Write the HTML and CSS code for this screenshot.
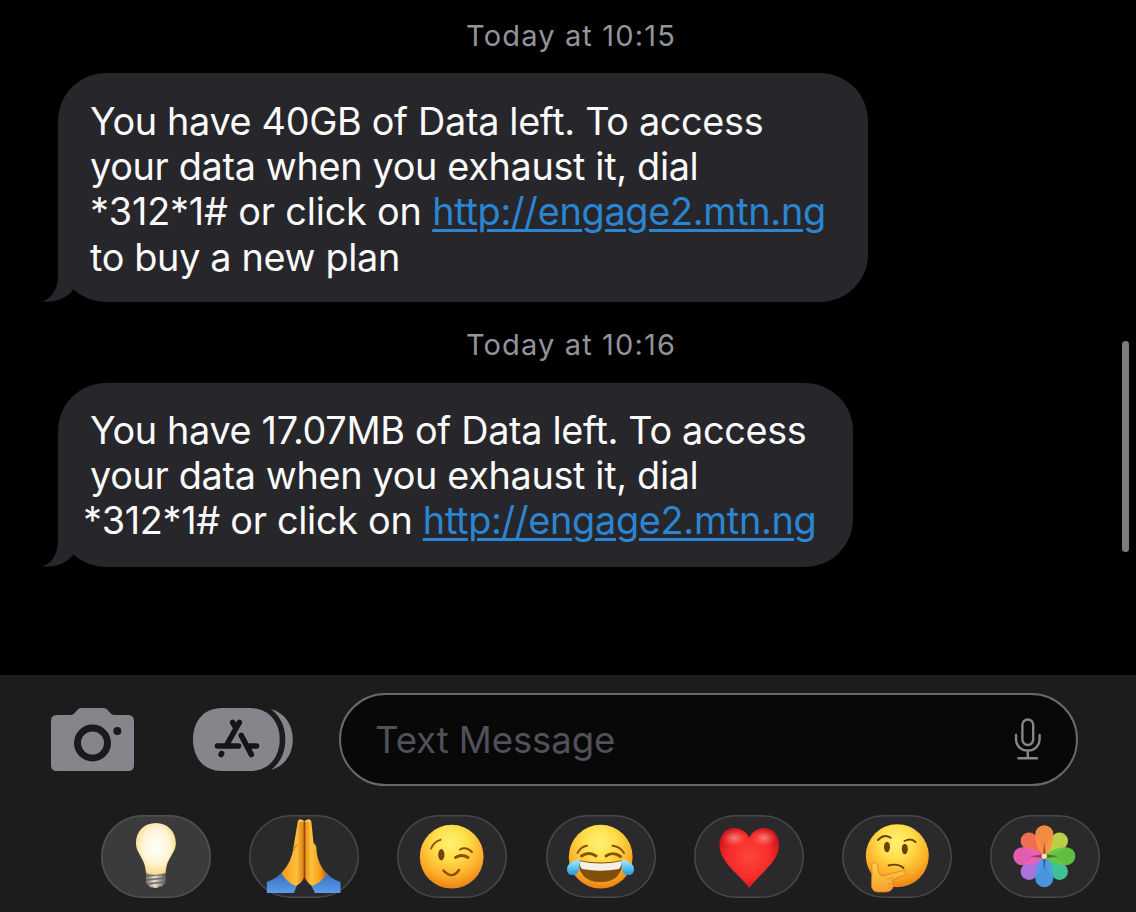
FILE: index.html
```html
<!DOCTYPE html>
<html lang="en">
<head>
<meta charset="utf-8">
<title>Messages</title>
<link rel="stylesheet" href="styles.css">
</head>
<body>
<main class="thread">
  <time class="stamp">Today at 10:15</time>
  <article class="bubble bubble-first">
    <p class="line">You have 40GB of Data left. To access</p>
    <p class="line">your data when you exhaust it, dial</p>
    <p class="line code">*312*1# or click on <a class="link">http://engage2.mtn.ng</a></p>
    <p class="line">to buy a new plan</p>
    <svg class="tail" viewBox="0 0 34 54"><path d="M16 0V27C16 40 11 50 0 53.6C13 55 25 50 32 41L34 0Z"/></svg>
  </article>
  <time class="stamp stamp-second">Today at 10:16</time>
  <article class="bubble bubble-second">
    <p class="line">You have 17.07MB of Data left. To access</p>
    <p class="line">your data when you exhaust it, dial</p>
    <p class="line code outdent">*312*1# or click on <a class="link">http://engage2.mtn.ng</a></p>
    <svg class="tail" viewBox="0 0 34 54"><path d="M16 0V27C16 40 11 50 0 53.6C13 55 25 50 32 41L34 0Z"/></svg>
  </article>
  <div class="scrollbar"></div>
</main>
<footer class="composer">
  <div class="entry">
    <svg class="camera" viewBox="0 0 83 63">
      <path fill="#85868c" d="M6 7H19C22 7 23 6 25 3.500C27 1 28 0 31 0H52C55 0 56 1 58 3.500C60 6 61 7 64 7H77Q83 7 83 13V57Q83 63 77 63H6Q0 63 0 57V13Q0 7 6 7Z"/>
      <circle cx="41.500" cy="35" r="15" fill="none" stroke="#1a1a1b" stroke-width="7"/>
      <circle cx="66.300" cy="23" r="4" fill="#1a1a1b"/>
    </svg>
    <svg class="apps" viewBox="0 0 100 63">
      <path fill="#85868c" d="M29 0H57C76 0 86.700 14 86.700 31.500S76 63 57 63H29C10 63 0 49 0 31.500S10 0 29 0Z"/>
      <path fill="#85868c" d="M78 1C92 5 99.800 17 99.800 31.500S92 58 78 62C87 55 92.300 45 92.300 31.500S87 8 78 1Z"/>
      <g fill="none" stroke="#151516" stroke-width="5.600" stroke-linecap="round">
        <path d="M46.300 14.500L34.500 35.500M39.700 14.500L43 20M24.500 38H45.500M48.300 27.500L58.300 46.500M57 38H63.500M28.600 45.500L28.100 46.500"/>
      </g>
    </svg>
    <div class="field">
      <span class="placeholder">Text Message</span>
      <svg class="mic" viewBox="0 0 28 44">
        <g fill="none" stroke="#85868c" stroke-width="2.400" stroke-linecap="round">
          <rect x="8.400" y="2.500" width="10.800" height="25.500" rx="5.400"/>
          <path d="M2 18V21.500C2 29 7 33.500 13.800 33.500S25.600 29 25.600 21.500V18M13.800 33.500V41M4.500 41.200H23"/>
        </g>
      </svg>
    </div>
  </div>
  <div class="reactions">
    <div class="pill pill-light"><svg viewBox="0 0 110 84">
      <defs>
        <radialGradient id="glow" cx=".5" cy=".45" r=".62"><stop offset="0" stop-color="#fffffb"/><stop offset=".55" stop-color="#fff5d6"/><stop offset=".85" stop-color="#fbdc94"/><stop offset="1" stop-color="#d9a95a"/></radialGradient>
        <linearGradient id="metal"><stop offset="0" stop-color="#77736a"/><stop offset=".45" stop-color="#e3dfd5"/><stop offset="1" stop-color="#625e57"/></linearGradient>
      </defs>
      <path d="M45 57H64.500V68L60 72Q55 76 49 72L45 68Z" fill="url(#metal)"/>
      <path d="M45 61L65 59M45 65L65 63M46 69L64 67" stroke="#6d6860" stroke-width="1.300"/>
      <path d="M50 73Q56 76 60 72" stroke="#413724" stroke-width="2.500" fill="none"/>
      <path d="M54.800 8C43 8 35 16.500 35 28C35 39 44 42 45 58Q55 61.500 64.700 58C65.500 42 74.800 39 74.800 28C74.800 16.500 66.500 8 54.800 8Z" fill="url(#glow)"/>
    </svg></div>
    <div class="pill"><svg viewBox="0 0 110 84">
      <defs>
        <linearGradient id="handL"><stop offset="0" stop-color="#f59a16"/><stop offset=".65" stop-color="#ffbe3b"/><stop offset="1" stop-color="#d27b12"/></linearGradient>
        <linearGradient id="handR"><stop offset="0" stop-color="#e58c12"/><stop offset=".3" stop-color="#ffc13e"/><stop offset=".7" stop-color="#f69d19"/><stop offset="1" stop-color="#b96508"/></linearGradient>
        <linearGradient id="sleeve" x2="0" y2="1"><stop offset="0" stop-color="#356fbf"/><stop offset="1" stop-color="#5b9be9"/></linearGradient>
      </defs>
      <path d="M17.800 67Q27 64 32 58L48 70L45 78H17.800ZM91.500 67Q82 64 78 58L62 70L66 78H91.500Z" fill="url(#sleeve)"/>
      <path d="M55.500 6Q49 1.500 48.500 8L44.500 32Q43 47 32.500 58Q38 68 47 71Q54 67 55.500 61Z" fill="url(#handL)"/>
      <path d="M55.500 6Q62 1.500 62.500 8L64.500 28Q68 30 67.500 36Q69 50 78 59Q72 68 63 71Q57 67 55.500 61Z" fill="url(#handR)"/>
      <path d="M55.500 7V63" stroke="#8f4905" stroke-width="1.600"/>
      <path d="M44.500 36Q45.500 31 48.500 30" stroke="#d97d0e" stroke-width="1.200" fill="none"/>
      <path d="M50 7Q52 4 54 7M57 7Q59 4 61 7" stroke="#ffd574" stroke-width="1.400" fill="none"/>
    </svg></div>
    <div class="pill"><svg viewBox="0 0 110 84">
      <defs><radialGradient id="face" cx=".48" cy=".28" r=".74"><stop offset="0" stop-color="#fff174"/><stop offset=".35" stop-color="#ffdf4c"/><stop offset=".72" stop-color="#fcae28"/><stop offset="1" stop-color="#ea7d13"/></radialGradient></defs>
      <circle cx="54.700" cy="41.700" r="31.900" fill="url(#face)"/>
      <ellipse cx="44.300" cy="39.700" rx="3.100" ry="5.700" fill="#78400c"/>
      <g fill="none" stroke="#8c4c0c" stroke-linecap="round">
        <path d="M34 33.500Q37 26.500 43.500 24.800" stroke-width="1.900"/>
        <path d="M63 34.500Q69 31 75 37" stroke-width="1.900"/>
        <path d="M58.500 42.500Q65 38.500 71 42.500" stroke-width="2.800"/>
        <path d="M46.500 55.500Q55 65 62 55" stroke-width="2.500"/>
      </g>
    </svg></div>
    <div class="pill"><svg viewBox="0 0 110 84">
      <defs><linearGradient id="tear" x2="0" y2="1"><stop offset="0" stop-color="#b6eefb"/><stop offset=".5" stop-color="#62c8f0"/><stop offset="1" stop-color="#2399dc"/></linearGradient></defs>
      <circle cx="54.700" cy="41.700" r="31.900" fill="url(#face)"/>
      <path d="M32 45Q54.500 50 77 45Q76 67 54.500 67Q33 67 32 45Z" fill="#805008"/>
      <path d="M33 46Q54.500 51 76 46Q75.500 51 73 54Q54.500 57.500 36 54Q33.500 51 33 46Z" fill="#f5efe7"/>
      <g fill="none" stroke="#8b4f0c" stroke-linecap="round">
        <path d="M35.500 41Q43 36 50 41M60 41Q67 36 74.500 41.500" stroke-width="2.900"/>
        <path d="M31.500 38Q35 31.500 41 30.800M66.500 30.800Q74 31.500 78 38" stroke-width="1.900"/>
      </g>
      <path d="M33.500 44Q21 47 21 54Q21 60 26.500 60C34 60 33.500 53 33.500 44ZM75.500 44Q88 47 88 54Q88 60 82.500 60C75 60 75.500 53 75.500 44Z" fill="url(#tear)"/>
    </svg></div>
    <div class="pill"><svg viewBox="0 0 110 84">
      <defs>
        <radialGradient id="heart" cx=".5" cy=".48" r=".6"><stop offset="0" stop-color="#ff473b"/><stop offset=".6" stop-color="#f62b2a"/><stop offset="1" stop-color="#c20d14"/></radialGradient>
        <radialGradient id="shine"><stop offset="0" stop-color="#ff9d96" stop-opacity=".75"/><stop offset="1" stop-color="#ff6a61" stop-opacity="0"/></radialGradient>
      </defs>
      <path d="M55.300 23C50 9 25.500 8 25.500 30C25.500 47 44 58 55.300 73C66 58 85 47 85 30C85 8 60 9 55.300 23Z" fill="url(#heart)"/>
      <ellipse cx="40" cy="23" rx="13" ry="9" fill="url(#shine)"/><ellipse cx="70" cy="23" rx="13" ry="9" fill="url(#shine)"/>
    </svg></div>
    <div class="pill"><svg viewBox="0 0 110 84">
      <defs><linearGradient id="hand" x2="0" y2="1"><stop offset="0" stop-color="#ffd04a"/><stop offset="1" stop-color="#f4a130"/></linearGradient></defs>
      <circle cx="55.300" cy="40.700" r="31.500" fill="url(#face)"/>
      <ellipse cx="45" cy="32" rx="3" ry="5.200" fill="#6b3e0b"/><ellipse cx="62.800" cy="34" rx="3" ry="5.200" fill="#6b3e0b"/>
      <g fill="none" stroke="#6b400c" stroke-linecap="round">
        <path d="M36 25Q42 18.500 48.800 22.800M62.500 26Q69 22.500 73.500 27" stroke-width="1.900"/>
        <path d="M46.500 50.500Q56 48 61.500 53" stroke-width="1.900"/>
      </g>
      <path d="M30 52Q29 47 33 47.500Q36 48 36.500 57L39.500 61L61.500 55.500Q65.500 56 63.500 59.500L50.500 65L51.500 71Q50 77 43 77H35Q29.500 76 29.500 70Z" fill="url(#hand)" stroke="#da7c17" stroke-width=".8"/>
      <path d="M45 64.500L51 62.500M46 69H51M46 73H50" stroke="#e08a20" stroke-width=".9" fill="none"/>
    </svg></div>
    <div class="pill"><svg viewBox="0 0 110 84">
      <g transform="translate(54.300 41.200)" fill-opacity=".94">
        <path transform="rotate(45)" fill="#c5da4b" d="M0 0C-5-5-8.500-13-8.500-21.500A8.500 8.500 0 0 1 8.500-21.500C8.500-13 5-5 0 0Z"/>
        <path transform="rotate(135)" fill="#43c99d" d="M0 0C-5-5-8.500-13-8.500-21.500A8.500 8.500 0 0 1 8.500-21.500C8.500-13 5-5 0 0Z"/>
        <path transform="rotate(225)" fill="#b477e5" d="M0 0C-5-5-8.500-13-8.500-21.500A8.500 8.500 0 0 1 8.500-21.500C8.500-13 5-5 0 0Z"/>
        <path transform="rotate(315)" fill="#fb7357" d="M0 0C-5-5-8.500-13-8.500-21.500A8.500 8.500 0 0 1 8.500-21.500C8.500-13 5-5 0 0Z"/>
        <path fill="#ff9142" d="M0 0C-6-5-9-14-9-22A9 9 0 0 1 9-22C9-14 6-5 0 0Z"/>
        <path transform="rotate(90)" fill="#65c743" d="M0 0C-6-5-9-14-9-22A9 9 0 0 1 9-22C9-14 6-5 0 0Z"/>
        <path transform="rotate(180)" fill="#4b9bea" d="M0 0C-6-5-9-14-9-22A9 9 0 0 1 9-22C9-14 6-5 0 0Z"/>
        <path transform="rotate(270)" fill="#ee61b6" d="M0 0C-6-5-9-14-9-22A9 9 0 0 1 9-22C9-14 6-5 0 0Z"/>
        <path d="M0-14L1.500-2L14 0L1.500 2L0 14L-1.500 2L-14 0L-1.500-2Z" fill="#5c2b35" fill-opacity=".6"/>
        <circle r="2.700" fill="#fff3a5"/>
      </g>
    </svg></div>
  </div>
</footer>
</body>
</html>
```
FILE: styles.css
```css
* { box-sizing: border-box; }
body {
  margin: 0;
  width: 1136px;
  height: 912px;
  overflow: hidden;
  display: flex;
  flex-direction: column;
  background: #000;
  font-family: Inter, "Liberation Sans", sans-serif;
}
.thread {
  position: relative;
  height: 675px;
  padding: 18px 0 0 58px;
}
.stamp {
  display: block;
  height: 36px;
  margin: 0 53px 0 -4px;
  padding-left: 5px;
  text-align: center;
  font-size: 29px;
  line-height: 36px;
  letter-spacing: 1.15px;
  color: #93939b;
  white-space: nowrap;
}
.stamp-second { margin-top: 25px; }
.bubble {
  position: relative;
  border-radius: 48px;
  background: #27262b;
  color: #fafafa;
  font-size: 37.8px;
  line-height: 45.2px;
  letter-spacing: -0.33px;
  font-feature-settings: "calt" 0;
  white-space: nowrap;
}
.bubble-first { width: 810px; height: 229px; margin-top: 19px; padding: 26px 0 0 32px; }
.bubble-second { width: 795px; height: 184px; margin-top: 20px; padding: 25px 0 0 32px; }
.line { margin: 0; height: 45.2px; }
.code { letter-spacing: -0.17px; }
.outdent { margin-left: -7px; letter-spacing: -0.29px; }
.link {
  color: #2a86d2;
  letter-spacing: -0.28px;
  text-decoration: underline;
  text-decoration-thickness: 3px;
  text-underline-offset: 4px;
}
.tail {
  position: absolute;
  left: -16px;
  bottom: 0;
  width: 34px;
  height: 54px;
  fill: #27262b;
}
.scrollbar {
  position: absolute;
  right: 7px;
  top: 341px;
  width: 7px;
  height: 211px;
  border-radius: 4px;
  background: #7d7d7d;
}
.composer {
  height: 237px;
  padding-top: 18px;
  background: #1c1c1d;
}
.entry {
  display: flex;
  align-items: center;
  height: 93px;
  padding-left: 51px;
}
.camera { width: 83px; height: 63px; }
.apps { width: 100px; height: 63px; margin-left: 58.6px; }
.field {
  display: flex;
  align-items: center;
  justify-content: space-between;
  width: 739px;
  height: 93px;
  margin-left: 46.4px;
  padding: 0 34px 0 34px;
  border: 2px solid #69696b;
  border-radius: 47px;
  background: #080808;
}
.placeholder { font-size: 36.5px; line-height: 46px; color: #505159; letter-spacing: -0.05px; }
.mic { width: 28px; height: 44px; margin-top: -2px; }
.reactions {
  display: flex;
  gap: 38.2px;
  margin: 29px 0 0 101px;
}
.pill {
  flex: none;
  width: 110px;
  height: 83px;
  border-radius: 42px;
  background: #2a2a2c;
  box-shadow: inset 0 0 0 1.5px #48484b;
}
.pill-light { background: #3b3b3c; box-shadow: inset 0 0 0 1.5px #515152; }
.pill svg { display: block; width: 110px; height: 84px; }
```
